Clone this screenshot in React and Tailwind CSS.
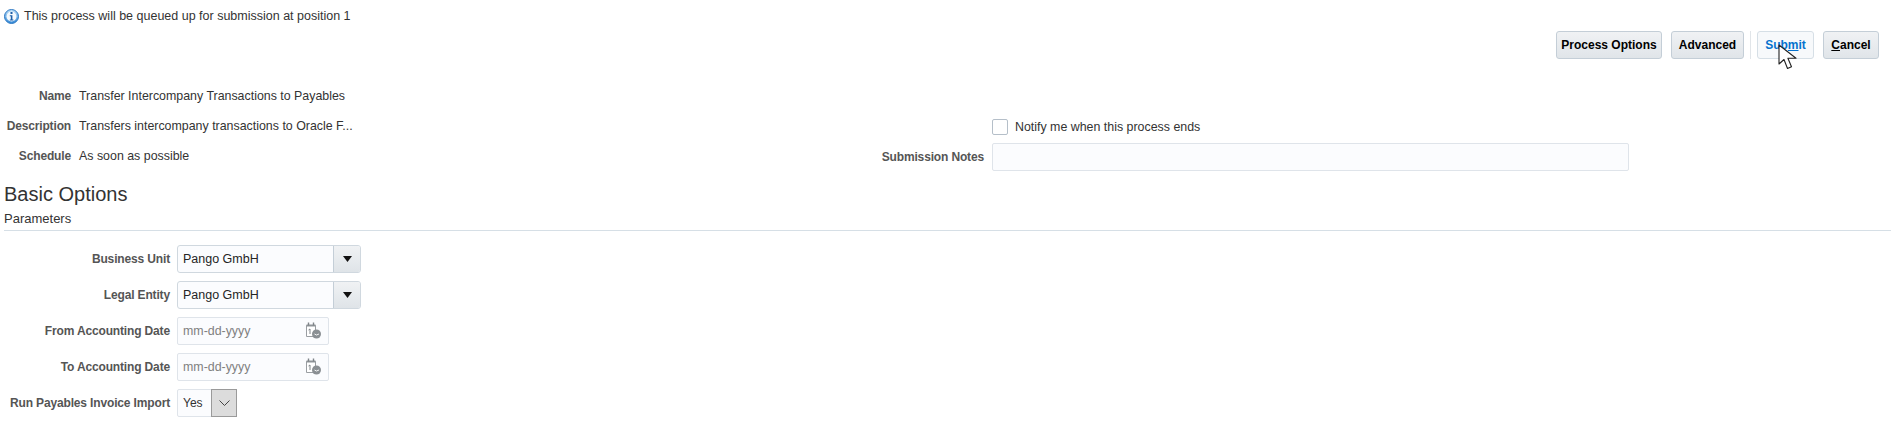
import React from "react";

function Btn({ children, active, width }) {
  return (
    <button
      className={
        (active
          ? "h-7 rounded-[3px] border border-[#d6dfe6] bg-[#f7f9fb] text-[#0572ce] text-[12px] font-bold "
          : "h-7 rounded-[3px] border border-[#c4ced7] bg-gradient-to-b from-[#f0f2f4] to-[#e0e5e9] text-black text-[12px] font-bold ") + width
      }
    >
      {children}
    </button>
  );
}

function Caret() {
  return (
    <span className="w-[27px] h-full flex items-center justify-center border-l border-[#c4ced7] bg-gradient-to-b from-[#f0f2f4] to-[#dfe4e8]">
      <svg width="9" height="6" viewBox="0 0 9 6"><path d="M0 0h9L4.5 6z" fill="#111" /></svg>
    </span>
  );
}

function Select({ value }) {
  return (
    <div className="w-[184px] h-7 flex items-center justify-between rounded-[3px] border border-[#d0d8df] bg-[#fbfcfe] overflow-hidden">
      <span className="pl-[5px] text-[12.5px] text-[#252525]">{value}</span>
      <Caret />
    </div>
  );
}

function CalIcon() {
  return (
    <svg width="17" height="18" viewBox="0 0 17 18" fill="none">
      <path d="M1.5 3.5h9v11h-9z" fill="#fff" stroke="#9a9ea2" />
      <path d="M1.5 2.5h9v2h-9z" fill="#8f9498" />
      <path d="M3.5 0.5v3M8.5 0.5v3" stroke="#7f8488" strokeWidth="1.4" />
      <path d="M3.5 8l1.5-1v5" stroke="#7f8488" />
      <circle cx="11.5" cy="12" r="4.5" fill="#8a8f93" />
      <path d="M9.5 12l2 1 2.5-1" stroke="#fff" strokeWidth="0.9" />
    </svg>
  );
}

function DateInput() {
  return (
    <div className="w-[152px] h-7 flex items-center justify-between rounded-[2px] border border-[#dfe4ea] bg-[#fbfcfe] pl-[5px] pr-[6px]">
      <span className="text-[12.4px] text-[#808080]">mm-dd-yyyy</span>
      <CalIcon />
    </div>
  );
}

function Row({ label, children }) {
  return (
    <div className="flex items-center h-7">
      <label className="w-[170px] text-right text-[12px] tracking-[-0.15px] font-bold text-[#555] shrink-0">{label}</label>
      <div className="ml-[7px]">{children}</div>
    </div>
  );
}

function Info({ label, value }) {
  return (
    <div className="flex items-center h-[30px]">
      <span className="w-[71px] text-right text-[12px] tracking-[-0.15px] font-bold text-[#555] shrink-0">{label}</span>
      <span className="ml-2 text-[12.4px] text-[#333]">{value}</span>
    </div>
  );
}

export default function App() {
  return (
    <div className="relative h-[443px] w-[1891px] overflow-hidden bg-white font-['Liberation_Sans',Arial,sans-serif]">
      <div className="flex items-center h-4 mt-2 pl-1 gap-[5px]">
        <svg width="15" height="15" viewBox="0 0 15 15">
          <defs>
            <linearGradient id="ig" x1="0" y1="0" x2="0" y2="1">
              <stop offset="0" stopColor="#bfe0f8" />
              <stop offset="1" stopColor="#2f86d6" />
            </linearGradient>
          </defs>
          <circle cx="7.5" cy="7.5" r="7" fill="url(#ig)" stroke="#2e78c2" />
          <circle cx="7.5" cy="7.5" r="5" fill="#f4f9fd" />
          <rect x="6.5" y="3" width="2" height="2" fill="#1d5fa8" />
          <path d="M5.8 6.2h2.6v4.3h1v1H5.8v-1h1V7.2h-1z" fill="#1d5fa8" />
        </svg>
        <span className="text-[12.5px] text-[#333]">This process will be queued up for submission at position 1</span>
      </div>

      <div className="flex justify-end items-center mt-[7px] pr-3 h-7">
        <Btn width="w-[106px]">Process Options</Btn>
        <div className="ml-[9px]"><Btn width="w-[73px]">Advanced</Btn></div>
        <div className="mx-[6px] w-px h-7 bg-[#e1e5e9]" />
        <Btn active width="w-[57px]">
          Sub<u>m</u>it
        </Btn>
        <div className="ml-[9px]">
          <Btn width="w-[56px]"><u>C</u>ancel</Btn>
        </div>
      </div>

      <div className="flex mt-[22px] h-[90px]">
        <div className="w-[880px] shrink-0">
          <Info label="Name" value="Transfer Intercompany Transactions to Payables" />
          <Info label="Description" value="Transfers intercompany transactions to Oracle F..." />
          <Info label="Schedule" value="As soon as possible" />
        </div>
        <div className="pt-[30px] flex flex-col">
          <div className="flex items-center h-[32px] pl-[112px] gap-[7px]">
            <span className="w-4 h-4 rounded-[2px] border border-[#b5bfc9] bg-white" />
            <span className="text-[12.4px] text-[#333]">Notify me when this process ends</span>
          </div>
          <div className="flex items-center h-7">
            <span className="w-[104px] text-right text-[12px] tracking-[-0.15px] font-bold text-[#555]">Submission Notes</span>
            <div className="ml-2 w-[637px] h-7 rounded-[2px] border border-[#dfe4ea] bg-[#fbfcfe]" />
          </div>
        </div>
      </div>

      <h2 className="ml-1 mt-[11px] text-[20px] leading-[24px] text-[#333]">Basic Options</h2>
      <div className="ml-1 mt-[6px] text-[13px] leading-[14px] text-[#333]">Parameters</div>
      <div className="ml-1 mt-[4px] border-t border-[#d6dfe6]" />

      <div className="mt-[14px] flex flex-col gap-2">
        <Row label="Business Unit"><Select value="Pango GmbH" /></Row>
        <Row label="Legal Entity"><Select value="Pango GmbH" /></Row>
        <Row label="From Accounting Date"><DateInput /></Row>
        <Row label="To Accounting Date"><DateInput /></Row>
        <Row label="Run Payables Invoice Import">
          <div className="w-[60px] h-7 flex items-center justify-between rounded-[2px] border border-[#dfe4ea] bg-[#fbfcfe]">
            <span className="pl-[5px] text-[12px] text-[#333]">Yes</span>
            <span className="w-[26px] h-7 -mr-px flex items-center justify-center border border-[#9a9a9a] bg-[#dcdcdc]">
              <svg width="11" height="6" viewBox="0 0 11 6" fill="none"><path d="M0.5 0.5l5 5 5-5" stroke="#444" /></svg>
            </span>
          </div>
        </Row>
      </div>

      <svg className="absolute left-[1778px] top-[44px]" width="20" height="27" viewBox="0 0 20 27">
        <path d="M1 1v19l5-4.5 3.5 9 4-1.7-3.6-8.6H18z" fill="#fff" stroke="#222" strokeWidth="1.1" strokeLinejoin="round" />
      </svg>
    </div>
  );
}
